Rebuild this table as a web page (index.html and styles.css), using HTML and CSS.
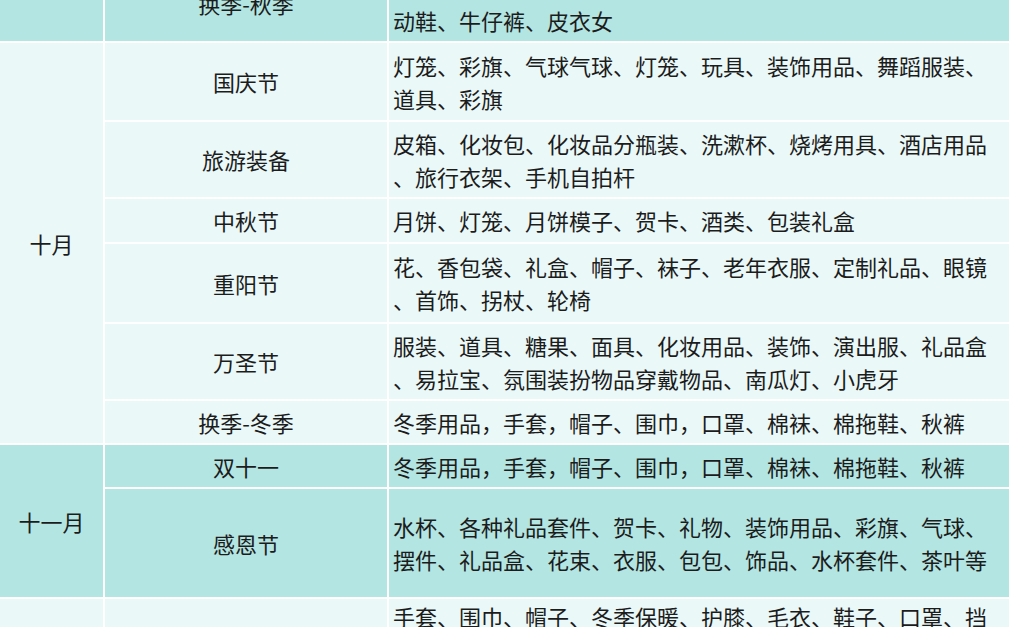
FILE: index.html
```html
<!DOCTYPE html>
<html lang="zh-CN">
<head>
<meta charset="utf-8">
<title>节日选品表</title>
<link rel="stylesheet" href="styles.css">
</head>
<body>
<table class="sheet">
  <colgroup>
    <col class="c-month">
    <col class="c-fest">
    <col class="c-items">
  </colgroup>
  <tbody>
    <tr class="h75">
      <td class="month dark"></td>
      <td class="fest dark">换季-秋季</td>
      <td class="items dark">秋装、长袖T恤、卫衣、外套、风衣、针织衫、长裤、运<br>动鞋、牛仔裤、皮衣女</td>
    </tr>
    <tr class="h77">
      <td class="month light" rowspan="6">十月</td>
      <td class="fest light">国庆节</td>
      <td class="items light">灯笼、彩旗、气球气球、灯笼、玩具、装饰用品、舞蹈服装、<br>道具、彩旗</td>
    </tr>
    <tr class="h75">
      <td class="fest light">旅游装备</td>
      <td class="items light">皮箱、化妆包、化妆品分瓶装、洗漱杯、烧烤用具、酒店用品<br>、旅行衣架、手机自拍杆</td>
    </tr>
    <tr class="h43">
      <td class="fest light">中秋节</td>
      <td class="items light">月饼、灯笼、月饼模子、贺卡、酒类、包装礼盒</td>
    </tr>
    <tr class="h78">
      <td class="fest light">重阳节</td>
      <td class="items light">花、香包袋、礼盒、帽子、袜子、老年衣服、定制礼品、眼镜<br>、首饰、拐杖、轮椅</td>
    </tr>
    <tr class="h75">
      <td class="fest light">万圣节</td>
      <td class="items light">服装、道具、糖果、面具、化妆用品、装饰、演出服、礼品盒<br>、易拉宝、氛围装扮物品穿戴物品、南瓜灯、小虎牙</td>
    </tr>
    <tr class="h42">
      <td class="fest light">换季-冬季</td>
      <td class="items light">冬季用品，手套，帽子、围巾，口罩、棉袜、棉拖鞋、秋裤</td>
    </tr>
    <tr class="h42">
      <td class="month dark" rowspan="2">十一月</td>
      <td class="fest dark">双十一</td>
      <td class="items dark">冬季用品，手套，帽子、围巾，口罩、棉袜、棉拖鞋、秋裤</td>
    </tr>
    <tr class="h108">
      <td class="fest dark">感恩节</td>
      <td class="items dark">水杯、各种礼品套件、贺卡、礼物、装饰用品、彩旗、气球、<br>摆件、礼品盒、花束、衣服、包包、饰品、水杯套件、茶叶等</td>
    </tr>
    <tr class="h100">
      <td class="month light"></td>
      <td class="fest light"></td>
      <td class="items light">手套、围巾、帽子、冬季保暖、护膝、毛衣、鞋子、口罩、挡<br>风被、暖手宝、热水袋、加湿器、电热毯、保温杯、棉靴<br>、羽绒服、加绒裤</td>
    </tr>
  </tbody>
</table>
</body>
</html>
```
FILE: styles.css
```css
html,
body {
  margin: 0;
  padding: 0;
  overflow: hidden;
  background: #ffffff;
}

.sheet {
  border-collapse: separate;
  border-spacing: 2px;
  table-layout: fixed;
  width: 1013px;
  margin: -36px 0 0 -2px;
  background: #ffffff;
  font-family: "Noto Sans CJK SC", "Noto Sans", sans-serif;
  font-size: 22px;
  line-height: 33px;
  color: #1c1c1c;
}

.c-month { width: 103px; }
.c-fest { width: 282px; }
.c-items { width: 620px; }

.sheet td {
  padding: 0 4px;
  vertical-align: middle;
  white-space: nowrap;
  overflow: hidden;
}

.month,
.fest {
  text-align: center;
}

.items {
  text-align: left;
}

.dark { background: #b3e5e2; }
.light { background: #eaf8f8; }

.h42 { height: 42px; }
.h43 { height: 43px; }
.h75 { height: 75px; }
.h77 { height: 77px; }
.h78 { height: 78px; }
.h100 { height: 100px; }
.h108 { height: 108px; }
```
